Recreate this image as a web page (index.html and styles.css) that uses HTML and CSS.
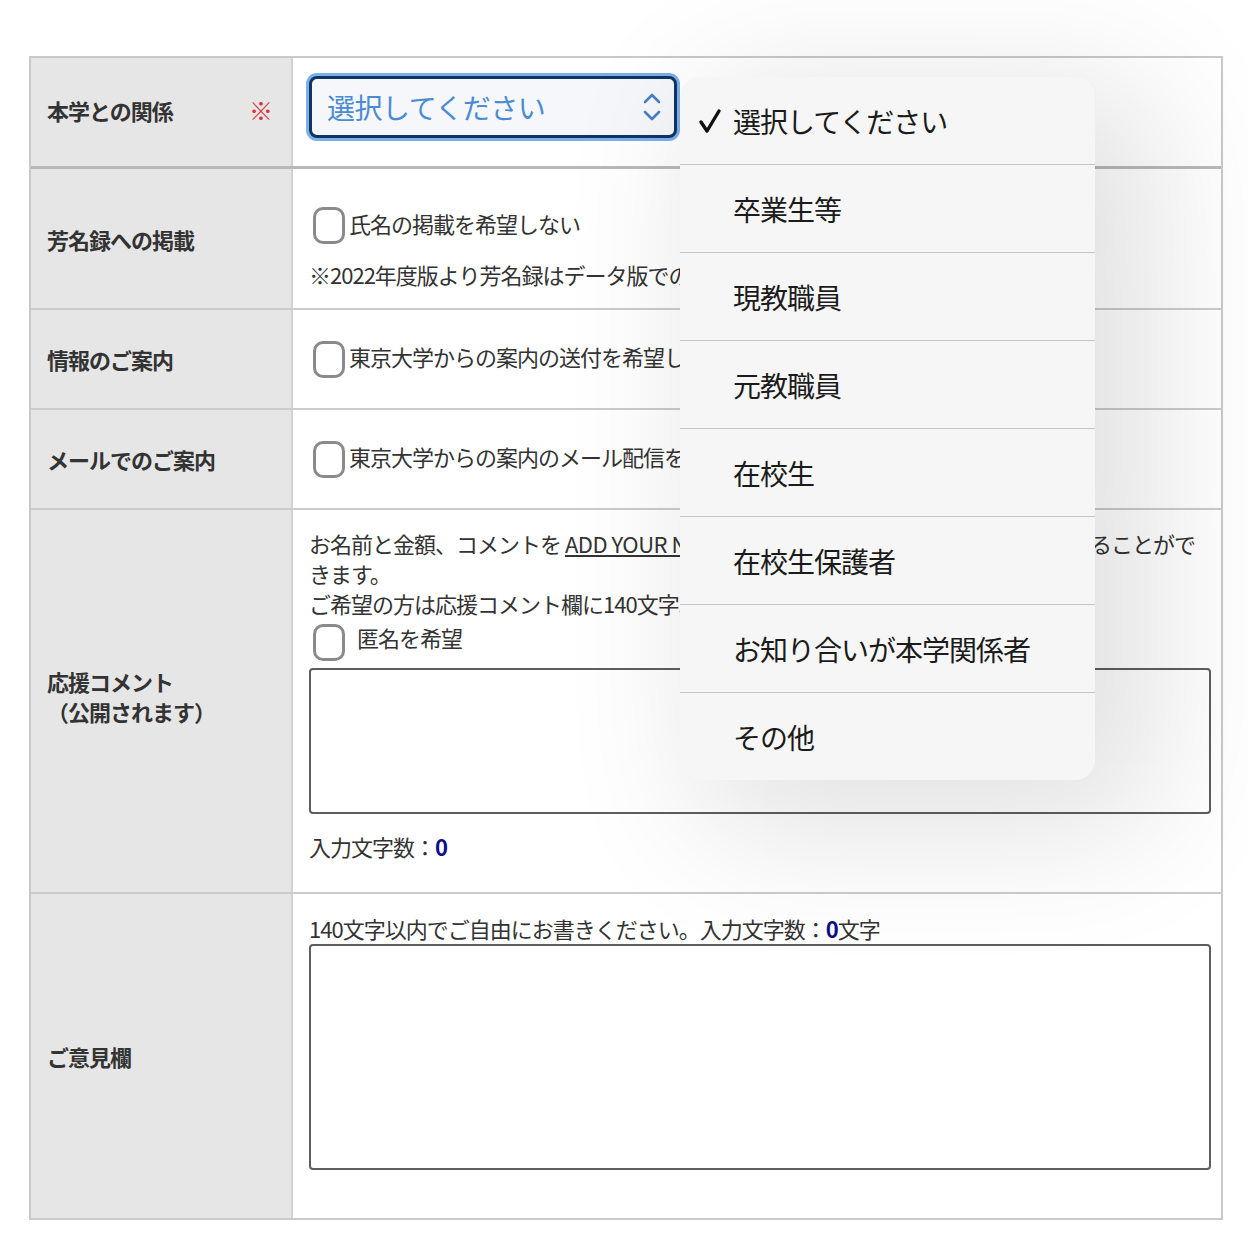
FILE: index.html
```html
<!DOCTYPE html>
<html lang="ja">
<head>
<meta charset="utf-8">
<title>フォーム</title>
<link rel="stylesheet" href="styles.css">
</head>
<body>
<div class="form">
  <div class="row r1">
    <div class="label label-req"><span>本学との関係</span><span class="req">※</span></div>
    <div class="field field-select">
      <div class="select">
        <span class="select-text">選択してください</span>
        <svg class="chev" width="20" height="30" viewBox="0 0 20 30"><path d="M3 10 L10 3 L17 10 M3 20 L10 27 L17 20" fill="none" stroke="#4a80c2" stroke-width="2.6" stroke-linecap="round" stroke-linejoin="round"/></svg>
      </div>
    </div>
  </div>
  <div class="row r2">
    <div class="label">芳名録への掲載</div>
    <div class="field field-top">
      <label class="check"><span class="box"></span><span>氏名の掲載を希望しない</span></label>
      <p class="note">※2022年度版より芳名録はデータ版での公開となります。</p>
    </div>
  </div>
  <div class="row r3">
    <div class="label">情報のご案内</div>
    <div class="field field-mid">
      <label class="check"><span class="box"></span><span>東京大学からの案内の送付を希望しない</span></label>
    </div>
  </div>
  <div class="row r4">
    <div class="label">メールでのご案内</div>
    <div class="field field-mid">
      <label class="check"><span class="box"></span><span>東京大学からの案内のメール配信を希望しない</span></label>
    </div>
  </div>
  <div class="row r5">
    <div class="label">応援コメント<br>（公開されます）</div>
    <div class="field field-comment">
      <p class="para">お名前と金額、コメントを <a class="link">ADD YOUR NAME</a> ページに掲載し、サイト上にて公開することができます。<br>ご希望の方は応援コメント欄に140文字以内でご記入ください。</p>
      <label class="check check-wide"><span class="box"></span><span>匿名を希望</span></label>
      <div class="textarea ta-small"></div>
      <p class="count">入力文字数：<b class="num">0</b></p>
    </div>
  </div>
  <div class="row r6">
    <div class="label">ご意見欄</div>
    <div class="field field-opinion">
      <p class="para">140文字以内でご自由にお書きください。入力文字数：<b class="num">0</b>文字</p>
      <div class="textarea ta-large"></div>
    </div>
  </div>

  <ul class="popup">
    <li class="item selected"><svg class="tick" width="24" height="28" viewBox="0 0 24 28"><path d="M3 15 L9 24 L21 4" fill="none" stroke="#111" stroke-width="3.4" stroke-linecap="round" stroke-linejoin="round"/></svg>選択してください</li>
    <li class="item">卒業生等</li>
    <li class="item">現教職員</li>
    <li class="item">元教職員</li>
    <li class="item">在校生</li>
    <li class="item">在校生保護者</li>
    <li class="item">お知り合いが本学関係者</li>
    <li class="item">その他</li>
  </ul>
</div>
</body>
</html>
```

FILE: styles.css
```css
* { box-sizing: border-box; }
html, body { margin: 0; padding: 0; background: #ffffff; }
body {
  font-family: "Noto Sans CJK JP", "Noto Sans", sans-serif;
  color: #333;
  padding: 56px 25px 0 29px;
}
p { margin: 0; }

.form {
  position: relative;
  width: 1194px;
  border: 2px solid #c9c9c9;
  border-bottom: none;
}

.row {
  display: flex;
  border-bottom: 2px solid #cbcbcb;
}
.r1 { height: 111px; border-bottom: 3px solid #b9b9b9; }
.r2 { height: 141px; }
.r3 { height: 100px; }
.r4 { height: 100px; }
.r5 { height: 384px; }
.r6 { height: 326px; }

.label {
  width: 262px;
  flex: none;
  background: #e6e6e6;
  border-right: 2px solid #d2d2d2;
  padding: 0 18px 0 16px;
  display: flex;
  align-items: center;
  font-size: 22px;
  letter-spacing: -1px;
  font-weight: bold;
  line-height: 30px;
  color: #333;
}
.r1 .label { padding-bottom: 4px; }
.r5 .label { display: block; padding-top: 156px; }
.label-req { justify-content: space-between; }
.req { color: #d8343a; font-weight: normal; font-size: 24px; letter-spacing: 0; }

.field {
  flex: 1;
  background: #fff;
  padding: 0 10px 0 16px;
  font-size: 22px;
  letter-spacing: -1px;
  line-height: 30px;
  color: #333;
}
.field-select { padding-top: 18px; }
.field-top { padding-top: 38px; }
.field-mid { display: flex; align-items: center; }
.field-comment { padding-top: 18px; }
.field-opinion { padding-top: 19px; }

.select {
  width: 368px;
  height: 62px;
  border: 3px solid #0f3566;
  border-radius: 8px;
  box-shadow: 0 0 0 3px #7cb0e8;
  background: #f5f7fa;
  display: flex;
  align-items: center;
  justify-content: space-between;
  padding: 0 12px 0 15px;
}
.select-text { color: #4a8bd4; font-size: 28px; letter-spacing: -0.5px; line-height: 1; }
.chev { display: block; }

.check {
  display: flex;
  align-items: center;
  gap: 4px;
}
.check > span:last-child { margin-top: -6px; }
.check-wide { gap: 12px; height: 48px; }
.check-wide > span:last-child { margin-top: -10px; }
.box {
  width: 32px;
  height: 37px;
  border: 3px solid #8a8a8a;
  border-radius: 10px;
  background: #fff;
  flex: none;
  margin-left: 4px;
}
.note { margin-top: 15px; margin-left: 0; }

.link { color: #333; text-decoration: underline; letter-spacing: -0.5px; }

.textarea {
  border: 2px solid #5e5e5e;
  border-radius: 4px;
  background: #fff;
  width: 902px;
}
.ta-small { height: 146px; margin-top: 2px; }
.ta-large { height: 226px; margin-top: 1px; }
.count { margin-top: 17px; }
.num { color: #0d0d8c; font-weight: bold; }

.popup {
  position: absolute;
  left: 649px;
  top: 19px;
  width: 415px;
  margin: 0;
  padding: 0;
  list-style: none;
  background: #f6f6f6;
  border-radius: 20px;
  box-shadow: 40px 30px 140px 20px rgba(0, 0, 0, 0.12);
  overflow: hidden;
}
.item {
  position: relative;
  height: 88px;
  display: flex;
  align-items: center;
  padding-left: 53px;
  font-size: 28px;
  letter-spacing: -1px;
  color: #1b1b1b;
  border-top: 1px solid #c4c4c4;
}
.item:first-child { border-top: none; height: 87px; }
.tick { position: absolute; left: 18px; top: 30px; }
```
